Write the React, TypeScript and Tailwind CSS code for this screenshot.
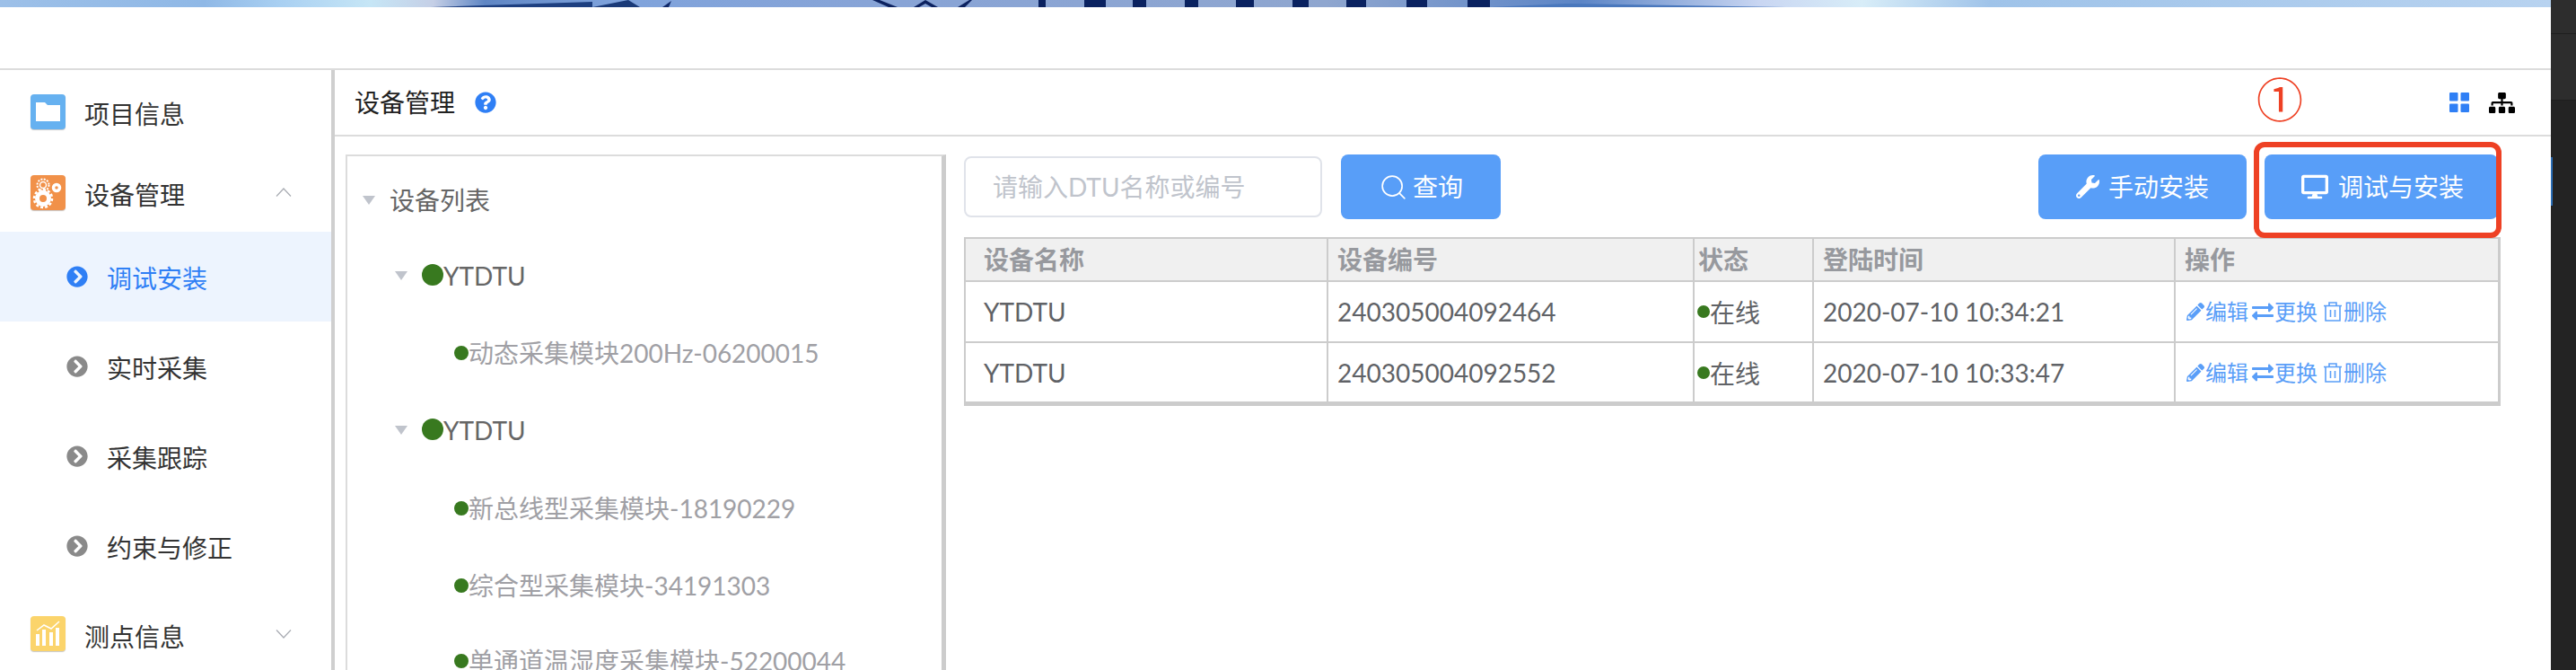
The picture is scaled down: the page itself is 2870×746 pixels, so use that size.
import { Search } from 'lucide-react'
import {
  FaChevronCircleRight,
  FaDesktop,
  FaExchangeAlt,
  FaPencilAlt,
  FaQuestionCircle,
  FaSitemap,
  FaWrench,
} from 'react-icons/fa'

const navyBars = [
  [1157, 8], [1208, 24], [1262, 15], [1320, 15], [1377, 20], [1440, 18],
  [1500, 22], [1567, 23], [1635, 25],
]

function TopBand() {
  return (
    <svg className="block h-2 w-full" viewBox="0 0 2842 8" preserveAspectRatio="none">
      <defs>
        <linearGradient id="sky">
          <stop offset="0" stopColor="#9dc0e8" />
          <stop offset="0.08" stopColor="#8fb8e6" />
          <stop offset="0.11" stopColor="#a9d0f2" />
          <stop offset="0.145" stopColor="#c6e6f6" />
          <stop offset="0.17" stopColor="#c5cfe6" />
          <stop offset="0.19" stopColor="#5f86c4" />
          <stop offset="0.24" stopColor="#7fa3dc" />
          <stop offset="0.35" stopColor="#88a4d6" />
          <stop offset="0.52" stopColor="#8fa6cf" />
          <stop offset="0.62" stopColor="#5c85c6" />
          <stop offset="0.69" stopColor="#c9d6f2" />
          <stop offset="0.73" stopColor="#d8edf8" />
          <stop offset="0.78" stopColor="#9fc3e9" />
          <stop offset="1" stopColor="#b8d3f0" />
        </linearGradient>
      </defs>
      <rect width="2842" height="8" fill="url(#sky)" />
      <polygon points="480,8 660,2 660,8" fill="#1d3f80" />
      <polygon points="660,8 700,0 713,8" fill="#1a3a78" />
      <polygon points="738,8 748,1 745,8" fill="#10296a" />
      <polygon points="972,0 980,0 1000,8 990,8" fill="#0c2260" />
      <polygon points="1018,8 1031,0 1045,8 1038,8 1031,4 1024,8" fill="#0c2260" />
      <polygon points="1067,8 1080,0 1083,0 1075,8" fill="#0c2260" />
      {navyBars.map(([x, w]) => (
        <rect key={x} x={x} y="0" width={w} height="8" fill="#0a2260" />
      ))}
      <polygon points="1660,8 1745,4 1990,8" fill="#4a78bd" />
    </svg>
  )
}

function FolderTile() {
  return (
    <svg viewBox="0 0 39 39" className="h-[39px] w-[39px] shrink-0 rounded-[4px] bg-[#66b1f0] shadow-[0_1px_1px_#c8c8c8]">
      <path d="M6 9h10l3 3h14v18H6z" fill="#fff" />
    </svg>
  )
}

function GearTile() {
  return (
    <svg viewBox="0 0 39 39" className="h-[39px] w-[39px] shrink-0 rounded-[4px] bg-[#f19149] shadow-[0_1px_1px_#c8c8c8]">
      <circle cx="14" cy="26" r="6.5" fill="none" stroke="#fff" strokeWidth="5" />
      <circle cx="14" cy="26" r="10" fill="none" stroke="#fff" strokeWidth="2.5" strokeDasharray="3 2.2" />
      <circle cx="14" cy="11" r="3.5" fill="none" stroke="#fff" strokeWidth="1.5" />
      <circle cx="14" cy="11" r="6.5" fill="none" stroke="#fff" strokeWidth="2" strokeDasharray="2 1.4" />
      <circle cx="29" cy="14" r="3.5" fill="none" stroke="#fff" strokeWidth="3.5" />
    </svg>
  )
}

function ChartTile() {
  return (
    <svg viewBox="0 0 39 39" className="h-[39px] w-[39px] shrink-0 rounded-[4px] bg-[#fbd46b] shadow-[0_1px_1px_#c8c8c8]">
      <g fill="#fff">
        <rect x="6" y="20" width="4" height="13" />
        <rect x="13" y="15" width="4" height="18" />
        <rect x="21" y="18" width="4" height="15" />
        <rect x="28" y="13" width="4" height="20" />
      </g>
      <path d="M7 16l8-6 8 4 9-8" fill="none" stroke="#fff" strokeWidth="1.5" />
    </svg>
  )
}

function Chevron({ up }: { up?: boolean }) {
  return (
    <svg viewBox="0 0 18 10" className="ml-auto mr-[44px] h-[10px] w-[18px]">
      <path d={up ? 'M1 9.5L9 1l8 8.5' : 'M1 .5L9 9l8-8.5'} fill="none" stroke="#a8abb2" strokeWidth="1.2" />
    </svg>
  )
}

function SubItem({ label, active }: { label: string; active?: boolean }) {
  return (
    <div className={`flex h-[100px] items-center gap-[21px] pl-[74px] ${active ? 'bg-[#edf4fe] text-[#2f7ff5]' : 'text-[#333]'}`}>
      <FaChevronCircleRight className={`text-[24px] ${active ? 'text-[#2f7ff5]' : 'text-[#8a8a8a]'}`} />
      <span className="pt-[4px]">{label}</span>
    </div>
  )
}

function Sidebar() {
  return (
    <aside className="w-[369px] shrink-0 text-[#333]">
      <div className="flex h-[92px] items-center gap-[21px] pl-[34px]">
        <FolderTile />
        <span className="pt-[6px]">项目信息</span>
      </div>
      <div className="flex h-[88px] items-center gap-[21px] pl-[34px]">
        <GearTile />
        <span className="pt-[6px]">设备管理</span>
        <Chevron up />
      </div>
      <SubItem label="调试安装" active />
      <SubItem label="实时采集" />
      <SubItem label="采集跟踪" />
      <SubItem label="约束与修正" />
      <div className="flex h-[95px] items-center gap-[21px] pl-[34px]">
        <ChartTile />
        <span className="pt-[6px]">测点信息</span>
        <Chevron />
      </div>
    </aside>
  )
}

function Caret({ className }: { className: string }) {
  return <span className={`h-0 w-0 border-x-[7px] border-t-[10px] border-x-transparent border-t-[#c0c4cc] ${className}`} />
}

function Device({ name, className }: { name: string; className: string }) {
  return (
    <div className={`flex h-[60px] items-center pl-[53px] text-[#666] ${className}`}>
      <Caret className="mr-4" />
      <span className="mb-[2px] h-6 w-6 rounded-full bg-[#38791f]" />
      <span>{name}</span>
    </div>
  )
}

function Module({ name, className }: { name: string; className: string }) {
  return (
    <div className={`flex h-[60px] items-center whitespace-nowrap pl-[119px] text-[#a0a0a5] ${className}`}>
      <span className="h-4 w-4 rounded-full bg-[#38791f]" />
      <span>{name}</span>
    </div>
  )
}

function DeviceTree() {
  return (
    <div className="h-[600px] w-[669px] shrink-0 border-l-2 border-r-[5px] border-t-2 border-[#dcdcdc] border-r-[#cccccc] pt-[19px]">
      <div className="flex h-[60px] items-center gap-4 pl-[17px] text-[#666]">
        <Caret className="" />
        <span>设备列表</span>
      </div>
      <Device name="YTDTU" className="mt-6" />
      <Module name="动态采集模块200Hz-06200015" className="mt-[26px]" />
      <Device name="YTDTU" className="mt-[26px]" />
      <Module name="新总线型采集模块-18190229" className="mt-[27px]" />
      <Module name="综合型采集模块-34191303" className="mt-[26px]" />
      <Module name="单通道温湿度采集模块-52200044" className="mt-[24px]" />
    </div>
  )
}

function DeviceRow({ code, time, rowClass }: { code: string; time: string; rowClass: string }) {
  const cell = 'border-b-2 border-r-2 border-[#cccccc] pl-[10px]'
  return (
    <tr className={`text-[#606266] ${rowClass}`}>
      <td className="border-b-2 border-r-2 border-[#cccccc] pl-5">YTDTU</td>
      <td className={cell}>{code}</td>
      <td className="border-b-2 border-r-2 border-[#cccccc] pl-[3px]">
        <span className="flex items-center">
          <span className="h-[14px] w-[14px] rounded-full bg-[#38791f]" />
          <span className="pt-[2px]">在线</span>
        </span>
      </td>
      <td className={cell}>{time}</td>
      <td className="border-b-2 border-[#cccccc] pl-3 text-[24px] text-[#5a9ef8]">
        <span className="flex items-center">
          <FaPencilAlt className="mr-px text-[20px]" />
          <span>编辑</span>
          <FaExchangeAlt className="ml-1 mr-px text-[24px]" />
          <span>更换</span>
          <svg viewBox="0 0 20 22" className="ml-[7px] mr-[2px] h-[22px] w-5" fill="none" stroke="currentColor" strokeWidth="1.6">
            <path d="M0 4.5h20M6 4.5V1h8v3.5M2 4.5V21h16V4.5M7.5 9v8M12.5 9v8" />
          </svg>
          <span>删除</span>
        </span>
      </td>
    </tr>
  )
}

function DeviceTable() {
  const head = 'border-b-2 border-r-2 border-[#cccccc] pl-[10px] text-left font-bold'
  return (
    <table className="mt-5 w-[1712px] table-fixed border-separate border-spacing-0 border-b-[3px] border-l-2 border-r-[3px] border-t-2 border-[#cccccc]">
      <colgroup>
        <col className="w-[404px]" />
        <col className="w-[408px]" />
        <col className="w-[133px]" />
        <col className="w-[403px]" />
        <col />
      </colgroup>
      <thead>
        <tr className="h-[48px] bg-[#f0f0f0] text-[#97999e]">
          <th className="border-b-2 border-r-2 border-[#cccccc] pl-5 text-left font-bold">设备名称</th>
          <th className={head}>设备编号</th>
          <th className="border-b-2 border-r-2 border-[#cccccc] pl-[4px] text-left font-bold">状态</th>
          <th className={head}>登陆时间</th>
          <th className="border-b-2 border-[#cccccc] pl-[10px] text-left font-bold">操作</th>
        </tr>
      </thead>
      <tbody>
        <DeviceRow code="240305004092464" time="2020-07-10 10:34:21" rowClass="h-[68px]" />
        <DeviceRow code="240305004092552" time="2020-07-10 10:33:47" rowClass="h-[67px]" />
      </tbody>
    </table>
  )
}

function DevicePanel() {
  return (
    <div className="ml-5 w-[1712px] shrink-0">
      <div className="flex h-[72px] items-center pr-[3px]">
        <div className="flex h-[68px] w-[399px] items-center rounded-lg border-2 border-[#e0e3ea] pl-[30px] text-[#c0c4cc]">
          请输入DTU名称或编号
        </div>
        <button className="ml-[21px] flex h-[72px] w-[178px] items-center justify-center gap-[5px] rounded-lg bg-[#589ef8] text-white">
          <Search className="h-[33px] w-[33px]" strokeWidth={1.2} />
          <span>查询</span>
        </button>
        <button className="ml-auto flex h-[72px] w-[232px] items-center justify-center gap-[10px] rounded-lg bg-[#589ef8] text-white">
          <FaWrench className="text-[26px]" />
          <span>手动安装</span>
        </button>
        <button className="ml-5 flex h-[72px] w-[260px] items-center justify-center gap-[11px] rounded-lg bg-[#589ef8] pl-[3px] text-white">
          <FaDesktop className="text-[30px]" />
          <span>调试与安装</span>
        </button>
      </div>
      <DeviceTable />
    </div>
  )
}

export default function App() {
  return (
    <div className="relative flex h-[746px] w-[2870px] overflow-hidden bg-white font-['Lato','Noto_Sans_CJK_SC',sans-serif] text-[28px] leading-none">
      <main className="w-[2842px] shrink-0">
        <TopBand />
        <div className="h-[70px] border-b-2 border-[#dcdcdc]" />
        <div className="flex">
          <Sidebar />
          <div className="h-[668px] w-1 shrink-0 bg-[#cfcfcf]" />
          <section className="flex-1">
            <header className="flex h-[74px] items-center border-b-2 border-[#dcdcdc] pl-[22px] pr-10 text-[#222]">
              <span>设备管理</span>
              <FaQuestionCircle className="ml-[22px] text-[24px] text-[#2f7ff5]" />
              <svg viewBox="0 0 22 22" className="ml-auto h-[22px] w-[22px] fill-[#2f7ff5]">
                <rect width="9.5" height="9.5" rx="1" />
                <rect x="12.5" width="9.5" height="9.5" rx="1" />
                <rect y="12.5" width="9.5" height="9.5" rx="1" />
                <rect x="12.5" y="12.5" width="9.5" height="9.5" rx="1" />
              </svg>
              <FaSitemap className="ml-[22px] text-[29px] text-black" />
            </header>
            <div className="mt-5 flex pl-3">
              <DeviceTree />
              <DevicePanel />
            </div>
          </section>
        </div>
      </main>
      <div className="relative w-7 shrink-0 bg-[#232323]">
        <div className="h-[38px] border-b border-[#1e1e1e] bg-[#2d2d2d]" />
        <div className="h-[74px] border-b border-[#1e1e1e] bg-[#2d2d2d]" />
        <div className="absolute left-0 top-[175px] h-[54px] w-[2px] bg-[#2a6db5]" />
      </div>

      {/* 标注：红框和序号 */}
      <div className="absolute left-[2511px] top-[158px] h-[107px] w-[276px] rounded-[12px] border-[6px] border-[#ee4124]" />
      <span className="absolute left-[2514px] top-[83px] font-['Noto_Sans_CJK_SC',sans-serif] text-[52px] text-[#ee4124]">①</span>
    </div>
  )
}
